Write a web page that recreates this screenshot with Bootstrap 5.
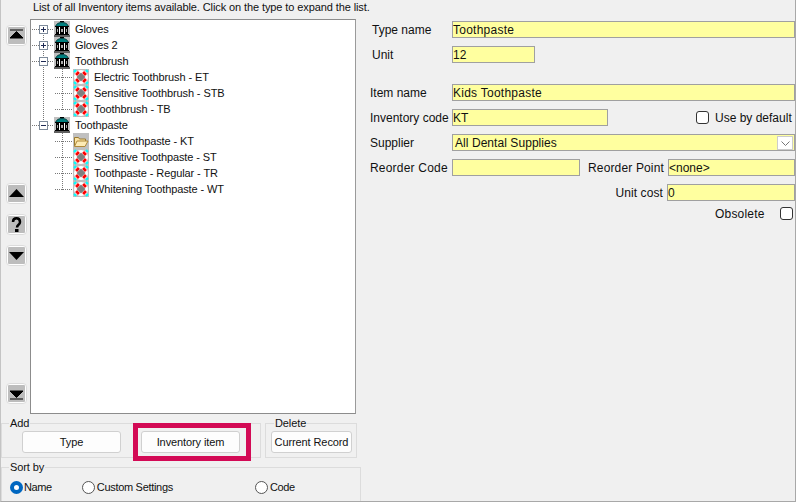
<!DOCTYPE html>
<html lang="en"><head><meta charset="utf-8"><title>Inventory</title>
<link href="https://cdn.jsdelivr.net/npm/bootstrap@5.3.0/dist/css/bootstrap.min.css" rel="stylesheet">
<style>
html,body{width:796px;height:502px;overflow:hidden}
body{background:#f0f0f0;color:#111;font:11px/16px "Liberation Sans",Arial,sans-serif;letter-spacing:-.1px;border-left:1px solid #c4c4c4;border-right:1px solid #a8a8a8;border-bottom:1px solid #a8a8a8}
.app-root{width:794px;height:501px}
.left-pane{width:359px;flex:none}
.hint-line{height:19px;padding-left:32px;line-height:15px;white-space:nowrap}
.main-area{height:395px}
.side-rail{width:29px;flex:none;padding:6px 0 10px 5px}
.rail-btn{width:21px;height:21px;border:1px solid #dcdcdc;border-radius:4px;background:#fff;padding:1px 1px;display:block}
.rail-btn svg{display:block;width:17px;height:17px;background:#bdbdbd;border-radius:1px}
.rail-mid{margin-top:137px;gap:10px}
.rail-last{margin-top:auto}
.tree-box{width:326px;background:#fff;border:1px solid #8c8c8c;border-right-color:#9a9a9a;padding-top:1px}
.tree-row{height:16px;display:flex;align-items:center;white-space:nowrap}
.tc{height:16px;flex:none}
.tc-a{width:23px}
.tc-b{width:19px}
.v-full{background:linear-gradient(#777 50%,transparent 50%) 12px 0/1px 2px repeat-y}
.n-first{background:linear-gradient(#fff,#fff) 12px 0/1px 8px no-repeat,linear-gradient(90deg,#777 50%,transparent 50%) 17px 8px/2px 1px repeat-x,linear-gradient(#777 50%,transparent 50%) 12px 0/1px 2px repeat-y}
.n-mid{background:linear-gradient(90deg,#777 50%,transparent 50%) 17px 8px/2px 1px repeat-x,linear-gradient(#777 50%,transparent 50%) 12px 0/1px 2px repeat-y}
.n-last{background:linear-gradient(#fff,#fff) 12px 9px/1px 7px no-repeat,linear-gradient(90deg,#777 50%,transparent 50%) 17px 8px/2px 1px repeat-x,linear-gradient(#777 50%,transparent 50%) 12px 0/1px 2px repeat-y}
.v-b{background:linear-gradient(#777 50%,transparent 50%) 8px 0/1px 2px repeat-y,linear-gradient(90deg,#777 50%,transparent 50%) 9px 8px/2px 1px repeat-x}
.v-end{background:linear-gradient(#fff,#fff) 8px 9px/1px 7px no-repeat,linear-gradient(#777 50%,transparent 50%) 8px 0/1px 2px repeat-y,linear-gradient(90deg,#777 50%,transparent 50%) 9px 8px/2px 1px repeat-x}
.xp{display:block;width:9px;height:9px;margin:4px 0 0 8px}
.ti{width:16px;height:16px;flex:none;display:block}
.tl{margin-left:5px}
.bottom-groups{height:47px;padding-top:3px}
.grp{border:1px solid #dcdcdc;margin:0;padding:0;min-width:0}
.grp legend{float:none;width:auto;font-size:11px;line-height:13px;margin:0 0 0 7px;padding:0 1px;color:#111}
.grp-add{width:260px;height:41px;position:relative}
.grp-del{width:92px;height:41px;margin-left:4px}
.grp-del legend{margin-left:8px}
.win-btn{background:#fdfdfd;border:1px solid #d0d0d0;border-radius:3px;height:22px;padding:0;font:11px/20px "Liberation Sans",Arial,sans-serif;letter-spacing:-.1px;color:#111;display:block;white-space:nowrap}
.b-type{width:99px;margin-left:20px}
.b-inv{width:99px;margin-left:20px}
.b-cur{width:81px;margin-left:5px}
.add-flex,.del-flex{padding-top:1px}
.hl-frame{position:absolute;left:131px;top:-7px;width:118px;height:38px;border:5px solid #d30a55;pointer-events:none}
.grp-sort{width:360px;height:40px;border-bottom:0}
.sort-flex{height:22px;padding-top:4px}
.rd{display:flex;align-items:center;gap:2px}
.rdo{width:13px;height:13px;flex:none;border-radius:50%;border:1px solid #555;background:#fff;display:block}
.rdo-on{border:4px solid #0067c0}
.r1{margin-left:8px;gap:1px;letter-spacing:-.4px}.r2{margin-left:30px;letter-spacing:-.3px}.r3{margin-left:82px;letter-spacing:-.4px}
.right-pane{padding:21px 0 0 8px;width:435px;font-size:12px;letter-spacing:0}
.f-row{height:17px;margin-bottom:8px;display:flex;align-items:center;white-space:nowrap}
.lb{width:84px;flex:none;padding-left:2px}
.lb-in{padding-left:4px}
.ls-rc{letter-spacing:.2px}
.inp{height:17px;background:#ffff9f;border:1px solid #a0a0a0;padding:0;font:12px/15px "Liberation Sans",Arial,sans-serif;color:#111;border-radius:0;outline:0;display:block}
.ls-wide{letter-spacing:.25px}
.w-full{width:343px}.w-83{width:83px}.w-156{width:156px}.w-128{width:128px}.w-127{width:127px}
.sel{display:flex;align-items:center;justify-content:space-between;padding:1px 1px 0 2px;letter-spacing:.06px}
.sel-btn{width:16px;height:14px;background:#fff;border:1px solid #ccc;display:flex;align-items:center;justify-content:center}
.cbx{width:13px;height:13px;border:1px solid #333;border-radius:3px;background:#fff;display:block;flex:none}
.push-ud{margin-left:88px;gap:6px}
.gap-sec{margin-top:21px}
.lb-rp{margin-left:8px;width:80px;padding-left:0;letter-spacing:.15px}
.lb-uc{margin-left:215px;width:84px;text-align:right;padding-right:4px;letter-spacing:.1px}
.ob{margin-left:347px;letter-spacing:.2px}
.ob-box{margin-left:15px}
.f-last{margin-top:-4px}
</style></head>
<body>
<svg width="0" height="0" class="d-none">
<symbol id="bank" viewBox="0 0 16 16"><rect width="16" height="16" fill="#c0c0c0"/><path d="M1.500 5.500C2.500 2.500 5 1.500 8 1.500s5.500 1 6.500 4z" fill="#008080" stroke="#004040"/><path d="M6 .5h4" stroke="#000"/><path d="M1 5.500h14M1 13.500h14M0 15h16" stroke="#000"/><rect x="2" y="6" width="12" height="7" fill="#000"/><path d="M5 6h1v7H5zM10 6h1v7h-1z" fill="#fff"/><path d="M3 8h1v3H3zM7 8h2v3H7zM12 8h1v3h-1z" fill="#aaa"/></symbol>
<symbol id="ring" viewBox="0 0 16 16"><rect width="16" height="16" fill="#c0c0c0"/><path d="M1 3l2-2M15 3l-2-2M1 13l2 2M15 13l-2 2" stroke="#0ff" stroke-width="2"/><circle cx="8" cy="8" r="7" fill="#fff"/><path d="M3.500 3.500l2 2M12.500 3.500l-2 2M3.500 12.500l2-2M12.500 12.500l-2-2" stroke="#f00" stroke-width="4"/><path d="M8 3.500L12.500 8 8 12.500 3.500 8z" fill="#808080"/></symbol>
<symbol id="folder" viewBox="0 0 16 16"><rect width="16" height="16" fill="#c0c0c0"/><path d="M1.500 13V4.500h4l1 1.500h6v2" fill="#fbe3a3" stroke="#9a7a30"/><path d="M1.500 13.500L4 8h11l-3 5.500z" fill="#fdebb5" stroke="#b08a3a"/></symbol>
<symbol id="plus" viewBox="0 0 9 9"><rect x=".5" y=".5" width="8" height="8" fill="#fff" stroke="#7d8a9a"/><path d="M2 4.500h5M4.500 2v5" stroke="#1e2a55"/></symbol>
<symbol id="minus" viewBox="0 0 9 9"><rect x=".5" y=".5" width="8" height="8" fill="#fff" stroke="#7d8a9a"/><path d="M2 4.500h5" stroke="#1e2a55"/></symbol>
</svg>
<div class="app-root d-flex">
 <div class="left-pane">
  <div class="hint-line">List of all Inventory items available. Click on the type to expand the list.</div>
  <div class="main-area d-flex">
   <div class="side-rail d-flex flex-column">
    <button class="rail-btn" type="button" aria-label="First"><svg viewBox="0 0 17 17"><path d="M2 3h13M8.500 4.500L15 11H2z" stroke="#000" fill="#000"/></svg></button>
    <div class="rail-mid d-flex flex-column">
     <button class="rail-btn" type="button" aria-label="Up"><svg viewBox="0 0 17 17"><path d="M8.500 4L16 12H1z"/></svg></button>
     <button class="rail-btn" type="button" aria-label="Help"><svg viewBox="0 0 17 17"><path d="M5 6c0-5 7-5 7 0 0 3-3 2.500-3 5.500" fill="none" stroke="#000" stroke-width="2.500"/><rect x="7" y="13" width="3.500" height="3"/></svg></button>
     <button class="rail-btn" type="button" aria-label="Down"><svg viewBox="0 0 17 17"><path d="M8.500 13L16 5H1z"/></svg></button>
    </div>
    <button class="rail-btn rail-last" type="button" aria-label="Last"><svg viewBox="0 0 17 17"><path d="M2 14h13M8.500 12.500L15 6H2z" stroke="#000" fill="#000"/></svg></button>
   </div>
   <div class="tree-box">
    <div class="tree-row"><span class="tc tc-a n-first"><svg class="xp"><use href="#plus"/></svg></span><svg class="ti"><use href="#bank"/></svg><span class="tl">Gloves</span></div>
    <div class="tree-row"><span class="tc tc-a n-mid"><svg class="xp"><use href="#plus"/></svg></span><svg class="ti"><use href="#bank"/></svg><span class="tl">Gloves 2</span></div>
    <div class="tree-row"><span class="tc tc-a n-mid"><svg class="xp"><use href="#minus"/></svg></span><svg class="ti"><use href="#bank"/></svg><span class="tl">Toothbrush</span></div>
    <div class="tree-row"><span class="tc tc-a v-full"></span><span class="tc tc-b v-b"></span><svg class="ti"><use href="#ring"/></svg><span class="tl">Electric Toothbrush - ET</span></div>
    <div class="tree-row"><span class="tc tc-a v-full"></span><span class="tc tc-b v-b"></span><svg class="ti"><use href="#ring"/></svg><span class="tl">Sensitive Toothbrush - STB</span></div>
    <div class="tree-row"><span class="tc tc-a v-full"></span><span class="tc tc-b v-end"></span><svg class="ti"><use href="#ring"/></svg><span class="tl">Toothbrush - TB</span></div>
    <div class="tree-row"><span class="tc tc-a n-last"><svg class="xp"><use href="#minus"/></svg></span><svg class="ti"><use href="#bank"/></svg><span class="tl">Toothpaste</span></div>
    <div class="tree-row"><span class="tc tc-a"></span><span class="tc tc-b v-b"></span><svg class="ti"><use href="#folder"/></svg><span class="tl">Kids Toothpaste - KT</span></div>
    <div class="tree-row"><span class="tc tc-a"></span><span class="tc tc-b v-b"></span><svg class="ti"><use href="#ring"/></svg><span class="tl">Sensitive Toothpaste - ST</span></div>
    <div class="tree-row"><span class="tc tc-a"></span><span class="tc tc-b v-b"></span><svg class="ti"><use href="#ring"/></svg><span class="tl">Toothpaste - Regular - TR</span></div>
    <div class="tree-row"><span class="tc tc-a"></span><span class="tc tc-b v-end"></span><svg class="ti"><use href="#ring"/></svg><span class="tl">Whitening Toothpaste - WT</span></div>
   </div>
  </div>
  <div class="bottom-groups d-flex">
   <fieldset class="grp grp-add"><legend>Add</legend>
    <div class="add-flex d-flex"><button class="win-btn b-type" type="button">Type</button><button class="win-btn b-inv" type="button">Inventory item</button></div>
    <div class="hl-frame"></div>
   </fieldset>
   <fieldset class="grp grp-del"><legend>Delete</legend>
    <div class="del-flex d-flex"><button class="win-btn b-cur" type="button">Current Record</button></div>
   </fieldset>
  </div>
  <fieldset class="grp grp-sort"><legend>Sort by</legend>
   <div class="sort-flex d-flex">
    <div class="rd r1"><span class="rdo rdo-on"></span>Name</div>
    <div class="rd r2"><span class="rdo"></span>Custom Settings</div>
    <div class="rd r3"><span class="rdo"></span>Code</div>
   </div>
  </fieldset>
 </div>
 <div class="right-pane">
  <div class="f-row"><span class="lb lb-in">Type name</span><input class="inp w-full ls-wide" value="Toothpaste" aria-label="Type name"></div>
  <div class="f-row"><span class="lb lb-in">Unit</span><input class="inp w-83" value="12" aria-label="Unit"></div>
  <div class="f-row gap-sec"><span class="lb">Item name</span><input class="inp w-full ls-wide" value="Kids Toothpaste" aria-label="Item name"></div>
  <div class="f-row"><span class="lb">Inventory code</span><input class="inp w-156" value="KT" aria-label="Inventory code"><div class="d-flex align-items-center push-ud"><span class="cbx"></span>Use by default</div></div>
  <div class="f-row"><span class="lb">Supplier</span><div class="inp w-full sel">All Dental Supplies<span class="sel-btn"><svg width="9" height="5" viewBox="0 0 9 5"><path d="M.5.500l4 4 4-4" fill="none" stroke="#777"/></svg></span></div></div>
  <div class="f-row"><span class="lb ls-rc">Reorder Code</span><input class="inp w-128" aria-label="Reorder Code"><span class="lb lb-rp">Reorder Point</span><input class="inp w-127" value="&lt;none&gt;" aria-label="Reorder Point"></div>
  <div class="f-row"><span class="lb lb-uc">Unit cost</span><input class="inp w-128" value="0" aria-label="Unit cost"></div>
  <div class="f-row f-last"><span class="ob">Obsolete</span><span class="cbx ob-box"></span></div>
 </div>
</div>
</body></html>
